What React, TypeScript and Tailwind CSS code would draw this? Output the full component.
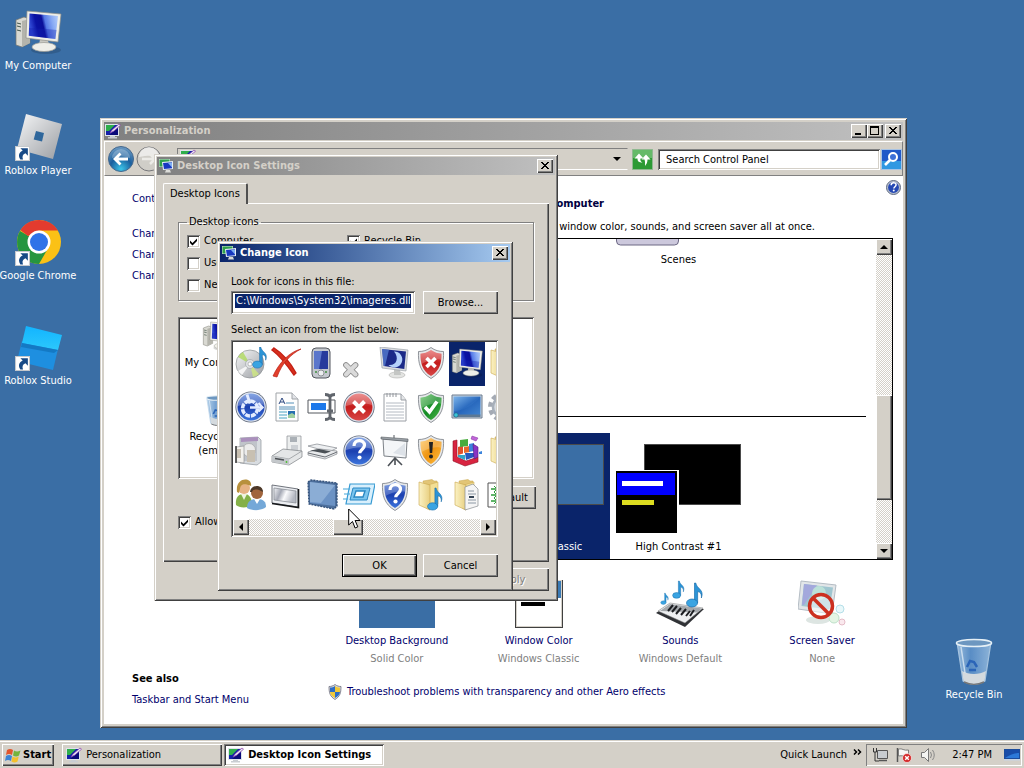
import React, { useState } from "react";
import type { ReactNode } from "react";

const WINDOW =
  "bg-[#d4d0c8] shadow-[inset_1px_1px_0_#d4d0c8,inset_-1px_-1px_0_#404040,inset_2px_2px_0_#fff,inset_-2px_-2px_0_#808080]";
const RAISED =
  "bg-[#d4d0c8] shadow-[inset_1px_1px_0_#fff,inset_-1px_-1px_0_#404040,inset_-2px_-2px_0_#808080]";
const SUNKEN =
  "shadow-[inset_1px_1px_0_#808080,inset_-1px_-1px_0_#fff,inset_2px_2px_0_#404040,inset_-2px_-2px_0_#d4d0c8]";
const TRACK = "bg-[repeating-conic-gradient(#ffffff_0_25%,#d4d0c8_0_50%)] bg-[length:2px_2px]";

function Svg({ size = 32, box = 32, children, className = "" }: { size?: number; box?: number; children: ReactNode; className?: string }) {
  return (
    <svg width={size} height={size} viewBox={`0 0 ${box} ${box}`} className={`shrink-0 ${className}`} aria-hidden="true">
      {children}
    </svg>
  );
}

function Defs() {
  return (
    <svg width="0" height="0" className="absolute" aria-hidden="true">
      <defs>
        <linearGradient id="screen" x1="0" y1="0.2" x2="1" y2="0">
          <stop offset="0" stopColor="#3048d4" />
          <stop offset="0.2" stopColor="#0a12a4" />
          <stop offset="0.42" stopColor="#0a0f9a" />
          <stop offset="0.52" stopColor="#5478e6" />
          <stop offset="0.75" stopColor="#88aaf4" />
          <stop offset="1" stopColor="#b8d0fa" />
        </linearGradient>
        <linearGradient id="silver" x1="0" y1="0" x2="1" y2="1">
          <stop offset="0" stopColor="#f6f7f8" />
          <stop offset="1" stopColor="#9a9da2" />
        </linearGradient>
        <linearGradient id="folder" x1="0" y1="0" x2="1" y2="0">
          <stop offset="0" stopColor="#fbf2c4" />
          <stop offset="1" stopColor="#e8cf80" />
        </linearGradient>
        <linearGradient id="red" x1="0" y1="0" x2="0" y2="1">
          <stop offset="0" stopColor="#e66a6a" />
          <stop offset="0.5" stopColor="#c41c1c" />
          <stop offset="1" stopColor="#d84848" />
        </linearGradient>
        <linearGradient id="green" x1="0" y1="0" x2="1" y2="1">
          <stop offset="0" stopColor="#6cc46c" />
          <stop offset="0.5" stopColor="#138a24" />
          <stop offset="1" stopColor="#4fb84a" />
        </linearGradient>
        <linearGradient id="blue" x1="0" y1="0" x2="0" y2="1">
          <stop offset="0" stopColor="#5a86dc" />
          <stop offset="0.5" stopColor="#1c40b0" />
          <stop offset="1" stopColor="#3c74dc" />
        </linearGradient>
        <linearGradient id="amber" x1="0" y1="0" x2="1" y2="1">
          <stop offset="0" stopColor="#ffc860" />
          <stop offset="0.5" stopColor="#ee9412" />
          <stop offset="1" stopColor="#ffbe40" />
        </linearGradient>
        <linearGradient id="wall" x1="0" y1="0" x2="1" y2="1">
          <stop offset="0" stopColor="#7db4ea" />
          <stop offset="0.5" stopColor="#2c6cc0" />
          <stop offset="1" stopColor="#5aa0e4" />
        </linearGradient>
        <linearGradient id="pane" x1="0" y1="0" x2="1" y2="0.3">
          <stop offset="0" stopColor="#f4f5f8" />
          <stop offset="0.35" stopColor="#a4a8b4" />
          <stop offset="0.6" stopColor="#fbfbfd" />
          <stop offset="1" stopColor="#b4b8c2" />
        </linearGradient>
        <linearGradient id="studioTop" x1="0" y1="0" x2="0" y2="1">
          <stop offset="0" stopColor="#12b4ff" />
          <stop offset="1" stopColor="#2cc8fc" />
        </linearGradient>
        <linearGradient id="glass" x1="0" y1="0" x2="1" y2="0">
          <stop offset="0" stopColor="#a9c9e6" />
          <stop offset="0.4" stopColor="#5f93cb" />
          <stop offset="1" stopColor="#9cc0e2" />
        </linearGradient>
        <radialGradient id="orb" cx="0.5" cy="0.9" r="0.9">
          <stop offset="0" stopColor="#3cc4e8" />
          <stop offset="0.5" stopColor="#1a5f9e" />
          <stop offset="1" stopColor="#6f9cc4" />
        </radialGradient>
      </defs>
    </svg>
  );
}

const Computer = ({ size = 32 }: { size?: number }) => (
  <Svg size={size} box={48}>
    <ellipse cx="32" cy="42" rx="15" ry="4" fill="#000" opacity=".15" />
    <path d="M2 12l8-3 6 2v24l-8 4-6-2z" fill="#d9d9d2" stroke="#77776f" strokeWidth=".7" />
    <path d="M8 13v26l8-4V11z" fill="#b4b4ac" />
    <path d="M3 15l4 1M3 18l4 1M3 22l4 1" stroke="#44564a" strokeWidth="1" />
    <path d="M26 31l8 1 1 6H25z" fill="#c9c9c2" />
    <ellipse cx="30" cy="39" rx="12" ry="4.500" fill="#efefe9" stroke="#9a9a92" strokeWidth=".7" />
    <path d="M13 3l34 3-3 28-32-4z" fill="#eeeee8" stroke="#8e8e86" strokeWidth=".7" />
    <path d="M15.500 5.500l28.500 2.600-2.600 23-26.600-3.300z" fill="url(#screen)" />
    <path d="M15 20c8 0 18 1 27.500 2l-1.100 9.100-26.600-3.300z" fill="#1420b0" opacity=".35" />
  </Svg>
);

const Personalize = ({ className = "" }: { className?: string }) => (
  <Svg size={16} box={16} className={className}>
    <path d="M0 1h14v12H0z" fill="#dfe4ea" />
    <path d="M1 2h12v10H1z" fill="#1420a8" />
    <path d="M1 2h9L4 8H1z" fill="#2fae4c" />
    <path d="M4 12l9-7v7z" fill="#0a0a78" />
    <path d="M5 13h5v1H5zM3 14h9v1.500H3z" fill="#c9cdd2" />
    <path d="M5 10l2-3 7-6 1.500 1.200L9 8z" fill="#e8e8f4" stroke="#8a3aa8" strokeWidth=".7" />
  </Svg>
);

const DialogIcon = () => (
  <Svg size={16} box={16}>
    <path d="M1 1h11v8H1z" fill="#cfe4d4" />
    <path d="M1.500 1.500h10v7h-10z" fill="#2fa04c" />
    <path d="M4 4l11-1v8L5 12z" fill="#e4ecf4" />
    <path d="M5 5l9-.8v6L6 11z" fill="#1838c0" />
    <path d="M10 5l4-.5v5z" fill="#7fb0f4" />
    <path d="M8 12h4l1 2.500H7z" fill="#dcdcd8" />
  </Svg>
);

const Shield = ({ fill, children }: { fill: string; children?: ReactNode }) => (
  <Svg>
    <path d="M16 .5c4 3 8 4 12.500 4C29 16 27 25 16 31.500 5 25 3 16 3.500 4.500c4.500 0 8.500-1 12.500-4z" fill="#e6e8ea" stroke="#777c84" strokeWidth=".8" />
    <path d="M16 3c3.500 2.400 7 3.500 10.500 3.700C26.500 16 25 23.500 16 29 7 23.500 5.500 16 5.500 6.700 9 6.500 12.500 5.400 16 3z" fill={fill} />
    <path d="M16 3c3.500 2.400 7 3.500 10.500 3.700 0 2-.1 4-.5 6C19 11 12 14 6.500 17 5.700 14 5.500 10 5.500 6.700 9 6.500 12.500 5.400 16 3z" fill="#fff" opacity=".22" />
    {children}
  </Svg>
);

const Question = () => (
  <g>
    <path d="M11 11c0-7 10.500-7 10.500-.7 0 4-4.800 4.200-4.800 8" fill="none" stroke="#fff" strokeWidth="3.200" />
    <circle cx="16.500" cy="22.500" r="2.100" fill="#fff" />
  </g>
);

const Orb = ({ fill, children }: { fill: string; children: ReactNode }) => (
  <Svg>
    <circle cx="16" cy="16" r="15.600" fill="#5c6678" />
    <circle cx="16" cy="16" r="14.800" fill="#dde3ee" />
    <circle cx="16" cy="16" r="13.500" fill={fill} />
    <path d="M3 15a13 13 0 0 1 26-1c-8-3-18-2-26 1z" fill="#fff" opacity=".25" />
    {children}
  </Svg>
);

const Folder = ({ children }: { children?: ReactNode }) => (
  <Svg>
    <path d="M8 2l9-1.500 2 1.500 3 0v24L12 30z" fill="#e2c576" stroke="#c9a64c" strokeWidth=".5" />
    <path d="M13 6l10-3v22l-9 6z" fill="#f3df95" stroke="#c9a64c" strokeWidth=".5" />
    <path d="M4 3l11 3v25L4 26z" fill="url(#folder)" stroke="#c9a64c" strokeWidth=".6" />
    {children}
  </Svg>
);

const Note = ({ x, y, s = 1 }: { x: number; y: number; s?: number }) => (
  <g transform={`translate(${x} ${y}) scale(${s})`}>
    <path d="M7 0c1 5 7 5 4.500 12 .4-4-1.500-5-3-5v9H6V0z" fill="#2c94d6" stroke="#1469a8" strokeWidth=".5" />
    <ellipse cx="4" cy="16" rx="4.400" ry="3.200" fill="#3aa4e2" stroke="#1469a8" strokeWidth=".5" />
  </g>
);

const Disc = () => (
  <Svg>
    <circle cx="15" cy="17" r="14" fill="url(#silver)" stroke="#8c9094" strokeWidth=".7" />
    <path d="M15 17L3 10a14 14 0 0 1 5-5z" fill="#a8d84c" opacity=".7" />
    <path d="M15 17l9 10a14 14 0 0 1-6 3z" fill="#d0e880" opacity=".8" />
    <path d="M15 17L7 28a14 14 0 0 1-4-4z" fill="#fff" opacity=".8" />
    <circle cx="15" cy="17" r="4.500" fill="#dfe2e4" stroke="#9a9ea2" strokeWidth=".6" />
    <circle cx="15" cy="17" r="2" fill="#fff" stroke="#888" strokeWidth=".5" />
    <Note x={18} y={0} s={1.1} />
  </Svg>
);

const RedCross = () => (
  <Svg>
    <path d="M3 1c8 5 16 14 22 25l-2 2C16 18 9 9 1 3z" fill="#d8301e" stroke="#c42014" strokeWidth="1.400" />
    <path d="M30 2C20 7 11 16 6 30l-4-1C8 16 18 5 30 2z" fill="#e2402c" stroke="#b81c12" strokeWidth=".7" />
  </Svg>
);

const Phone = () => (
  <Svg>
    <rect x="5" y="1" width="18" height="30" rx="4" fill="#c4c8ce" stroke="#53575e" />
    <path d="M7 4h14v18H7z" fill="#263a9c" />
    <path d="M7 4h8l-3 18H7z" fill="#7190e0" opacity=".7" />
    <circle cx="14" cy="26" r="3" fill="#eceef0" stroke="#6c7076" strokeWidth=".7" />
    <path d="M8 25h2M18 25h2" stroke="#3f8f3f" strokeWidth="1.500" />
  </Svg>
);

const SmallCross = () => (
  <Svg>
    <path d="M3 18l9.500 9.500M12.500 18L3 27.500" stroke="#8c8c8c" strokeWidth="5.800" strokeLinecap="round" />
    <path d="M3 18l9.500 9.500M12.500 18L3 27.500" stroke="#dadada" strokeWidth="4" strokeLinecap="round" />
  </Svg>
);

const NightMonitor = () => (
  <Svg>
    <ellipse cx="18" cy="28" rx="8" ry="3" fill="#e3e4e2" stroke="#a2a2a0" strokeWidth=".5" />
    <path d="M15 22l6 1 1 5h-7z" fill="#c4c6c4" />
    <path d="M1 0l28 3-2 21-24-3z" fill="#dcdee0" stroke="#9298a0" strokeWidth=".6" />
    <path d="M3 2l24 2.500-1.700 17.500L4.700 19z" fill="#1c2a88" />
    <path d="M15 4.500a8 8 0 1 1-5.500 13.500c8 1 11-7 5.500-13.500z" fill="#b4d0fa" />
    <path d="M3 2l7 .8L6 19l-1.500-.2z" fill="#5b86d8" opacity=".7" />
  </Svg>
);

const Access = () => (
  <Orb fill="url(#blue)">
    <circle cx="15" cy="17.500" r="7.500" fill="none" stroke="#e4ecff" strokeWidth="3.600" strokeDasharray="4.900 .99" />
    <path d="M12 3.500l3 9" stroke="#e4ecff" strokeWidth="2.800" fill="none" />
    <path d="M15 16.500h12M23.500 12l4 4.500-4 4" stroke="#e4ecff" strokeWidth="2.400" fill="none" />
  </Orb>
);

const RichDoc = () => (
  <Svg>
    <path d="M5 2h16l6 6v22H5z" fill="#fdfdfd" stroke="#a0a4a8" />
    <path d="M21 2v6h6" fill="#e2e4e8" stroke="#a0a4a8" />
    <path d="M8 13l3-6 3 6M9 11h4" stroke="#2c4880" fill="none" />
    <path d="M15 12h8M8 16h16M8 18h16" stroke="#5490b8" />
    <path d="M8 21h8M8 24h8M8 27h8" stroke="#4ba4c4" />
    <path d="M17 20h7v7h-7z" fill="#276fb0" />
    <path d="M17 24l4-2 3 2v3h-7z" fill="#9fcfa0" />
  </Svg>
);

const Rename = () => (
  <Svg>
    <path d="M1 9h27v13H1z" fill="#fff" stroke="#54585e" />
    <path d="M4 12h15v7H4z" fill="#1c78ea" />
    <path d="M18 3.500c3 0 4.500 1 5 2.500.5-1.500 2-2.500 5-2.500M18 28.500c3 0 4.500-1 5-2.500.5 1.500 2 2.500 5 2.500M23 6v20M20 20h6" stroke="#60656c" strokeWidth="2.800" fill="none" />
  </Svg>
);

const TextDoc = () => (
  <Svg>
    <path d="M5 3h17l5 6v21H5z" fill="#fff" stroke="#9a9ea4" />
    <path d="M22 3v6h5" fill="#e4e6e8" stroke="#9a9ea4" />
    <path d="M7 12h18M7 15h18M7 18h18M7 21h18M7 24h18M7 27h18" stroke="#b4bac2" />
    <path d="M8 2v4M11 2v4M14 2v4M17 2v4" stroke="#92969c" />
  </Svg>
);

const Wallpaper = () => (
  <Svg>
    <path d="M1 4h30v23H1z" fill="#c8d4e0" stroke="#6c7c90" />
    <path d="M2.500 5.500h27v19h-27z" fill="url(#wall)" />
    <path d="M3 20C12 20 22 14 29 6v18H3z" fill="#1f5cb4" opacity=".4" />
    <path d="M2.500 23.500h27V26h-27z" fill="#5c7894" />
    <circle cx="5" cy="24" r="2.200" fill="#3ac4d8" stroke="#1c5878" strokeWidth=".6" />
  </Svg>
);

const SoftwareBox = () => (
  <Svg>
    <path d="M5 3l18-1 3 3v22l-4 3-17-2z" fill="#d8dce0" stroke="#90969c" strokeWidth=".7" />
    <path d="M6 6h16v20H6z" fill="#c0c4ca" />
    <path d="M6 3l17-1v4l-17 1z" fill="#aa90bc" />
    <circle cx="14" cy="15" r="6.500" fill="#ececec" stroke="#a0a0a0" strokeWidth=".6" />
    <path d="M1 12l8-1v17l-8-1z" fill="#f4f2ee" stroke="#84888c" strokeWidth=".6" />
    <path d="M2 14l4 0v9H2zM12 15h8v12h-8z" fill="#c8c0b2" />
    <path d="M1 11v17" stroke="#333" strokeWidth="1.500" />
  </Svg>
);

const Drive = () => (
  <Svg>
    <path d="M16 1h14v16l-14 3z" fill="#eceeee" stroke="#8a8e92" strokeWidth=".7" />
    <path d="M19 2h7v5h-7z" fill="#aab0b6" />
    <path d="M20 10h7v6l-7 1z" fill="#ccd0d4" />
    <path d="M1 21l11-7 19 2v6L18 30 1 27z" fill="#e4e6e7" stroke="#7b7f84" strokeWidth=".7" />
    <path d="M1 21l17 3 13-8" fill="none" stroke="#94989c" strokeWidth=".8" />
    <path d="M18 24v6L1 27v-6z" fill="#c4c8cb" />
    <path d="M4 23.500l9 1.600" stroke="#4c5054" strokeWidth="1.500" />
    <circle cx="15.500" cy="27" r=".9" fill="#4cbc30" />
  </Svg>
);

const Scanner = () => (
  <Svg>
    <path d="M1 11l9-2 20 4-8 4z" fill="#eef0f2" stroke="#84888e" strokeWidth=".7" />
    <path d="M1 17l12-3 17 2v3l-12 5L1 20z" fill="#e8eaec" stroke="#84888e" strokeWidth=".7" />
    <path d="M3 15.500l9-1.500 12 2.500-6 2z" fill="#4a5056" />
    <path d="M1 18l17 4 12-5" stroke="#6a6e74" fill="none" />
  </Svg>
);

const Projector = () => (
  <Svg>
    <path d="M16 21v9M16 23l-7 8M16 23l7 7" stroke="#4b5056" strokeWidth="1.600" />
    <path d="M4 4l24 2-1 17-22-2z" fill="#f4f6f8" stroke="#7d8288" />
    <path d="M14 18L26 8v13z" fill="#dde2e8" />
    <path d="M2 2l27 2v2.500L2 4z" fill="#9ca2a8" stroke="#555a60" strokeWidth=".6" />
    <path d="M15 0v3" stroke="#555a60" />
  </Svg>
);

const Blocks = () => (
  <Svg>
    <path d="M2 6l4-1v17l9 4 12-4v5l-13 4L2 26z" fill="#d82440" stroke="#8e1024" strokeWidth=".6" />
    <path d="M7 12l5-1.500v8L7 20z" fill="#e2502c" />
    <path d="M9 5l8-1v7l-8 1z" fill="#48ac3c" />
    <path d="M13 12l6-1v6l-6 1z" fill="#e8682c" />
    <path d="M18 9l5-1v8l-5 1z" fill="#3c84dc" />
    <path d="M7 20h7v5l-7-3z" fill="#30a4c8" />
    <path d="M14 18h9v4l-8 3z" fill="#2858c0" />
    <path d="M22 9l5 3v10l-4 2z" fill="#8a34c4" stroke="#501c80" strokeWidth=".6" />
    <path d="M21 1l6 2-2 3-5-2z" fill="#c064d8" stroke="#80309c" strokeWidth=".5" />
    <path d="M28 17l3-1v3h-3z" fill="#3c84dc" />
  </Svg>
);

const Users = () => (
  <Svg>
    <circle cx="9" cy="9" r="6" fill="#e6b284" />
    <path d="M2 13C0-3 18-2 16 7c-4-2-8-2-9-1-2 1-2 4-3 8z" fill="#b8903c" />
    <path d="M1 26c-1-8 3-11 8-11s8 3 8 12c-6 2-13 2-16-1z" fill="#84b048" />
    <path d="M6 15l3 6 3-6z" fill="#eef4e0" />
    <circle cx="22" cy="14" r="6" fill="#a0643c" />
    <path d="M15 13c1-8 13-8 13 0l-2-1c-4-2-8-2-9 1z" fill="#4c3828" />
    <path d="M12 29c0-6 3-9 10-9s9 3 9 8c-5 4-14 4-19 1z" fill="#74a8d8" />
    <path d="M19 20l3 5 3-5z" fill="#fff" />
  </Svg>
);

const Pane = () => (
  <Svg>
    <path d="M1 6l26 4v18L1 24z" fill="#eceef2" stroke="#70747c" />
    <path d="M3 9l22 3v12L3 21z" fill="url(#pane)" stroke="#8c9098" strokeWidth=".8" />
    <path d="M27.500 10v18.500L1 24.500" stroke="#15171a" strokeWidth="1.600" fill="none" />
  </Svg>
);

const Chip = () => (
  <Svg>
    <path d="M1 3l3-2 26 3v23l-3 3L2 25z" fill="#4d6f9c" stroke="#35537c" strokeDasharray="2 1" strokeWidth="1.400" />
    <path d="M3 3l25 3v21L3 24z" fill="#6b92c4" />
    <path d="M3 3l25 3-14 18-11-1z" fill="#a5c2e4" opacity=".55" />
  </Svg>
);

const RunBox = () => (
  <Svg>
    <path d="M7 5h25l-4 20H3z" fill="#d8effc" stroke="#3499d2" strokeWidth="1.200" />
    <path d="M10 9h17l-3 12H7z" fill="#7cc5ee" stroke="#2a88c4" />
    <path d="M13 12h9l-2 6h-9z" fill="#fff" stroke="#2a88c4" strokeWidth="1.400" />
    <path d="M0 10h7M1 15h6M0 20h5" stroke="#45a8dc" strokeWidth="1.200" />
  </Svg>
);

const MusicFolder = () => <Folder><Note x={13} y={9} s={1.15} /></Folder>;
const DocFolder = () => (
  <Folder>
    <path d="M14 8l8-3 5 5v17l-13 4z" fill="#f5f5f5" stroke="#888c90" strokeWidth=".7" />
    <path d="M17 12h6M17 15h8M17 21h8M17 24h8" stroke="#8c98a4" />
    <path d="M18 17h5v2h-5z" fill="#345" />
  </Folder>
);
const Gear = () => (
  <Svg>
    <circle cx="16" cy="16" r="12.500" fill="none" stroke="#a4aab4" strokeWidth="5" strokeDasharray="4.500 3.350" />
    <circle cx="16" cy="16" r="10" fill="#d8dce2" stroke="#a8b0ba" strokeWidth="2.500" />
  </Svg>
);
const ArrowDoc = () => (
  <Svg>
    <path d="M1 4h26v24H1z" fill="#fff" stroke="#555" />
    <path d="M4 10h6M4 16h6M4 22h6" stroke="#2c9c38" strokeWidth="1.500" />
    <path d="M7 7l3 3-3 3M7 13l3 3-3 3M7 19l3 3-3 3" stroke="#2c9c38" fill="none" />
  </Svg>
);

const iconColumns: { name: string; art: ReactNode }[][] = [
  [
    { name: "Music disc", art: <Disc /> },
    { name: "Ease of access", art: <Access /> },
    { name: "Programs", art: <SoftwareBox /> },
    { name: "Users", art: <Users /> },
  ],
  [
    { name: "Delete", art: <RedCross /> },
    { name: "Rich document", art: <RichDoc /> },
    { name: "Drive", art: <Drive /> },
    { name: "Window pane", art: <Pane /> },
  ],
  [
    { name: "Phone", art: <Phone /> },
    { name: "Rename", art: <Rename /> },
    { name: "Scanner", art: <Scanner /> },
    { name: "Memory chip", art: <Chip /> },
  ],
  [
    { name: "Remove", art: <SmallCross /> },
    { name: "Error", art: <Orb fill="url(#red)"><path d="M10.500 10.500l11 11M21.500 10.500l-11 11" stroke="#fff" strokeWidth="4" /></Orb> },
    { name: "Help", art: <Orb fill="url(#blue)"><Question /></Orb> },
    { name: "Run", art: <RunBox /> },
  ],
  [
    { name: "Sleep", art: <NightMonitor /> },
    { name: "Text document", art: <TextDoc /> },
    { name: "Projector", art: <Projector /> },
    { name: "Help shield", art: <Shield fill="url(#blue)"><Question /></Shield> },
  ],
  [
    { name: "Error shield", art: <Shield fill="url(#red)"><path d="M11.500 11l9 9M20.500 11l-9 9" stroke="#fff" strokeWidth="3.600" /></Shield> },
    { name: "Safe shield", art: <Shield fill="url(#green)"><path d="M10 16l4.500 5L22 10.500" stroke="#fff" strokeWidth="3.600" fill="none" /></Shield> },
    { name: "Warning shield", art: <Shield fill="url(#amber)"><path d="M14 7h4l-.8 11h-2.400z" fill="#222" /><circle cx="16" cy="21.500" r="2" fill="#222" /></Shield> },
    { name: "Music folder", art: <MusicFolder /> },
  ],
  [
    { name: "Computer", art: <Computer /> },
    { name: "Desktop", art: <Wallpaper /> },
    { name: "Blocks", art: <Blocks /> },
    { name: "Documents folder", art: <DocFolder /> },
  ],
  [
    { name: "Folder", art: <Folder /> },
    { name: "Settings", art: <Gear /> },
    { name: "Open folder", art: <Folder /> },
    { name: "Transfer", art: <ArrowDoc /> },
  ],
];

const Shortcut = () => (
  <Svg size={15} box={14} className="absolute bottom-0 left-px">
    <path d="M0 0h14v14H0z" fill="#fff" />
    <path d="M.5.5h13v13H.5z" fill="none" stroke="#c4c8cc" />
    <path d="M5 2h7v7L9.800 6.800C7 8 6.500 10 7.500 12.500H5C2.500 9 4 5.500 7.200 4.200z" fill="#174a86" />
  </Svg>
);

const RobloxPlayer = () => (
  <Svg size={48} box={48}>
    <path d="M12 1l36 10-9 35L3 36z" fill="url(#silver)" />
    <path d="M22 18l8 2-2 8.500-8.300-2z" fill="#2f679c" />
  </Svg>
);
const Chrome = () => (
  <Svg size={48} box={48}>
    <circle cx="25" cy="24" r="22" fill="#fbc116" />
    <path d="M6 13a22 22 0 0 0 19 33l9.500-16.500L25 24z" fill="#269540" />
    <path d="M25 2C17 2 10 6 6.500 12.200L14 18l11-5.500h19A22 22 0 0 0 25 2z" fill="#e33b2e" />
    <circle cx="25" cy="24" r="11.500" fill="#fff" />
    <circle cx="25" cy="24" r="9" fill="#2f73e8" />
  </Svg>
);
const RobloxStudio = () => (
  <Svg size={48} box={48}>
    <path d="M8 18l36 8-5 21L3 38z" fill="#1e8fe0" />
    <path d="M12 3l36 9-4 15-36-7z" fill="url(#studioTop)" />
    <path d="M8 20l36 7-4 3L7 24z" fill="#1479c4" />
  </Svg>
);
const RecycleBin = ({ size = 48 }: { size?: number }) => (
  <Svg size={size} box={48}>
    <path d="M7 5h34l-6 39c-6 4-16 4-22 0z" fill="url(#glass)" opacity=".85" stroke="#b9d3ea" strokeWidth="1.200" />
    <path d="M12 34c7 4 17 4 24 0l-1.500 10c-6 4-16 4-21 0z" fill="#d4dade" />
    <path d="M14 45c6 3 14 3 20 0" stroke="#777" strokeWidth="1.500" fill="none" />
    <ellipse cx="24" cy="6" rx="17.500" ry="3.500" fill="#6d97c0" stroke="#e6f0f6" strokeWidth="1.600" />
    <path d="M17 30l3-6 4 1 3 5M19 33h7" stroke="#2b65b8" strokeWidth="2.500" fill="none" />
    <path d="M11 10l4 26" stroke="#dceaf6" strokeWidth="1.500" opacity=".8" />
  </Svg>
);

function DesktopIcon({ label, art, shortcut = false }: { label: string; art: ReactNode; shortcut?: boolean }) {
  return (
    <button type="button" className="flex w-20 flex-col items-center gap-[3px] text-white">
      <span className="relative block">
        {art}
        {shortcut && <Shortcut />}
      </span>
      <span className="whitespace-nowrap">{label}</span>
    </button>
  );
}

function Button({ children, primary = false, disabled = false }: { children: ReactNode; primary?: boolean; disabled?: boolean }) {
  return (
    <button
      type="button"
      disabled={disabled}
      className={`h-[23px] min-w-[75px] px-2 ${RAISED} ${primary ? "border border-black" : ""} ${disabled ? "text-[#808080] [text-shadow:1px_1px_0_#fff]" : ""}`}
    >
      {children}
    </button>
  );
}

function Caption({ kind }: { kind: "min" | "max" | "close" }) {
  const names = { min: "Minimize", max: "Maximize", close: "Close" };
  return (
    <button type="button" aria-label={names[kind]} className={`flex h-3.5 w-4 items-center justify-center ${RAISED}`}>
      <svg width="16" height="14" viewBox="0 0 16 14" shapeRendering="crispEdges">
        {kind === "min" && <path d="M4 9h6v2H4z" />}
        {kind === "max" && <path d="M3 2h9v9H3zM4 4v6h7V4z" fillRule="evenodd" />}
        {kind === "close" && (
          <path d="M4 3h2v1h1v1h2V4h1V3h2v1h-1v1h-1v1H9v1h1v1h1v1h1v1h-2V9H9V8H7v1H6v1H4V9h1V8h1V7h1V6H6V5H5V4H4z" />
        )}
      </svg>
    </button>
  );
}

function TitleBar({ icon, title, active = false, children }: { icon: ReactNode; title: string; active?: boolean; children: ReactNode }) {
  return (
    <header
      className={`flex h-[18px] items-center pr-0.5 pl-px font-bold ${active ? "bg-linear-to-r from-[#0a246a] to-[#a6caf0] text-white" : "bg-linear-to-r from-[#808080] to-[#c0c0c0] text-[#d4d0c8]"}`}
    >
      {icon}
      <h2 className="ml-[3px] flex-1">{title}</h2>
      {children}
    </header>
  );
}

function CheckBox({ label, checked = false }: { label: string; checked?: boolean }) {
  const [on, setOn] = useState(checked);
  return (
    <label className="flex items-center gap-1">
      <span className="relative block size-[13px]">
        <input
          type="checkbox"
          checked={on}
          onChange={(e) => setOn(e.target.checked)}
          className={`block size-[13px] appearance-none bg-white ${SUNKEN}`}
        />
        {on && (
          <svg width="13" height="13" viewBox="0 0 13 13" className="pointer-events-none absolute inset-0">
            <path d="M3 5.500l2.500 2.500L10 3.500v2.500L5.500 10.500 3 8z" />
          </svg>
        )}
      </span>
      {label}
    </label>
  );
}

function Arrow({ dir, label }: { dir: "up" | "down" | "left" | "right"; label: string }) {
  const d = { up: "M4 10h8L8 6z", down: "M4 6h8l-4 4z", left: "M10 4v8L6 8z", right: "M6 4v8l4-4z" }[dir];
  return (
    <button type="button" aria-label={label} className={`size-4 shrink-0 ${RAISED}`}>
      <svg width="16" height="16" viewBox="0 0 16 16">
        <path d={d} />
      </svg>
    </button>
  );
}

function ThemePreview({ wall, children }: { wall: string; children: ReactNode }) {
  return (
    <svg width="125" height="89" viewBox="0 0 125 89" aria-hidden="true" shapeRendering="crispEdges">
      <path d="M28.500.5h96v60h-96z" fill={wall} stroke="#4a4a4a" />
      {children}
    </svg>
  );
}

function Theme({ label, selected = false, children }: { label: string; selected?: boolean; children: ReactNode }) {
  return (
    <button type="button" className={`flex w-[137px] flex-col items-center gap-[7px] pt-[11px] pb-[5px] ${selected ? "bg-[#0a246a] text-white" : ""}`}>
      {children}
      <span>{label}</span>
    </button>
  );
}

const Setting = ({ label, value, children }: { label: string; value: string; children: ReactNode }) => (
  <a href="#" className="flex flex-col items-center">
    <span className="flex h-12 items-end">{children}</span>
    <span className="mt-1.5 text-[#00006c]">{label}</span>
    <span className="mt-1 text-[#808080]">{value}</span>
  </a>
);

function Personalization() {
  return (
    <section aria-label="Personalization" className={`absolute top-[118px] left-[100px] flex h-[610px] w-[807px] flex-col p-1 ${WINDOW}`}>
      <TitleBar icon={<Personalize />} title="Personalization">
        <div className="flex">
          <Caption kind="min" />
          <Caption kind="max" />
          <span className="ml-0.5 flex">
            <Caption kind="close" />
          </span>
        </div>
      </TitleBar>
      <nav className="mt-px flex h-[35px] items-center border border-t-white border-r-[#808080] border-b-[#808080] border-l-white pt-px pl-[3px]">
        <button type="button" aria-label="Back">
          <Svg size={26} box={26}>
            <circle cx="13" cy="13" r="12.500" fill="url(#orb)" stroke="#44678c" />
            <path d="M4 12a9 9 0 0 1 18 0c-6-2-12-2-18 0z" fill="#fff" opacity=".25" />
            <path d="M20 13H7M12.500 7.500L7 13l5.500 5.500" stroke="#fff" strokeWidth="2.800" fill="none" />
          </Svg>
        </button>
        <button type="button" aria-label="Forward" className="ml-0.5">
          <Svg size={26} box={26}>
            <circle cx="13" cy="13" r="12" fill="#d0cec8" stroke="#77777a" />
            <path d="M3 11a10 10 0 0 1 20 0c-7-2-13-1-20 0z" fill="#fff" opacity=".6" />
            <path d="M6 13h12M14 8l5 5-5 5" stroke="#ecebe7" strokeWidth="2.500" fill="none" />
          </Svg>
        </button>
        <div className="ml-[15px] flex h-[22px] flex-1 items-center gap-1.5 border border-t-[#808080] border-r-[#d4d0c8] border-b-white border-l-[#808080] pr-1.5 pl-0.5">
          <Personalize className="self-start" />
          <span className="flex-1 whitespace-nowrap">▸ Control Panel ▸ Appearance and Personalization ▸ Personalization</span>
          <button type="button" aria-label="Previous locations">
            <svg width="8" height="4" viewBox="0 0 8 4">
              <path d="M0 0h8L4 4z" />
            </svg>
          </button>
        </div>
        <button type="button" aria-label="Refresh" className="ml-1">
          <Svg size={21} box={21}>
            <path d="M.5.5h20v20H.5z" fill="#2c9a34" stroke="#8fb890" />
            <path d="M1 1h19v8H1z" fill="#8cd08c" opacity=".6" />
            <path d="M7 4.500L2.500 9.500h3c0 3 1.500 4 5 4-2-1-2.500-2.500-2-4h3zM14 5.500l4.500 5h-3c0 3-1 4.500-2.500 6.500 0-2 .3-4-.5-6.500h-3z" fill="#fff" />
          </Svg>
        </button>
        <input
          aria-label="Search Control Panel"
          defaultValue="Search Control Panel"
          className={`ml-[5px] h-[21px] w-[222px] bg-white px-2 ${SUNKEN}`}
        />
        <button type="button" aria-label="Search" className="ml-px">
          <Svg size={21} box={21}>
            <path d="M.5.5h20v20H.5z" fill="#2058c8" stroke="#a9c4e4" />
            <path d="M1 12h19v8H1z" fill="#38b4ec" opacity=".7" />
            <circle cx="12" cy="8" r="4" fill="#3c70d8" stroke="#fff" strokeWidth="2" />
            <path d="M9 11l-5 5" stroke="#fff" strokeWidth="2.600" />
          </Svg>
        </button>
      </nav>
      <div className="flex flex-1 bg-white">
        <aside className="flex w-[222px] flex-col justify-between pt-4 pb-[17px] pl-7 text-[#00006c]">
          <div className="flex flex-col gap-[7px]">
            <a href="#" className="mb-3.5">Control Panel Home</a>
            <a href="#">Change desktop icons</a>
            <a href="#">Change mouse pointers</a>
            <a href="#">Change your account picture</a>
          </div>
          <div className="flex flex-col gap-[7px]">
            <h3 className="font-bold text-black">See also</h3>
            <a href="#">Taskbar and Start Menu</a>
          </div>
        </aside>
        <main className="flex min-w-0 flex-1 flex-col pr-2.5">
          <button type="button" aria-label="Help" className="-mr-2.5 mt-1 self-end pr-0.5">
            <Svg size={15}>
              <circle cx="16" cy="16" r="15" fill="#b4bccc" stroke="#5c6880" strokeWidth="2" />
              <circle cx="16" cy="16" r="11.500" fill="#2448b4" />
              <Question />
            </Svg>
          </button>
          <h1 className="mt-0.5 flex w-[278px] justify-end font-bold whitespace-nowrap text-[#000040]">
            Change the visuals and sounds on your computer
          </h1>
          <p className="mt-[9px] flex w-[489px] justify-end whitespace-nowrap">
            Click a theme to change the desktop background, window color, sounds, and screen saver all at once.
          </p>
          <div className="mt-1 flex h-[322px] border border-black">
            <div className="flex-1 overflow-hidden pr-2.5 pl-[9px]">
              <div className="flex">
                {["Landscapes", "Nature", "Scenes"].map((name) => (
                  <button key={name} type="button" className="flex w-[137px] flex-col items-center">
                    <svg width="125" height="7" viewBox="0 0 125 7" aria-hidden="true">
                      <path d="M.5-1v3q0 4 4 4h54q4 0 4-4v-3z" fill="#ccc8dc" stroke="#6c6884" />
                    </svg>
                    <span className="mt-[7px]">{name}</span>
                  </button>
                ))}
              </div>
              <h3 className="mt-[135px] border-b border-black text-[#00006c]">Basic and High Contrast Themes (6)</h3>
              <div className="mt-4 flex">
                <Theme label="Windows 7 Basic">
                  <ThemePreview wall="#3a6ea5">
                    <path d="M0 27h62v62H0z" fill="#cfe0f4" />
                  </ThemePreview>
                </Theme>
                <Theme label="Windows Classic" selected>
                  <ThemePreview wall="#3a6ea5">
                    <path d="M0 27h62v62H0z" fill="#d4d0c8" />
                  </ThemePreview>
                </Theme>
                <Theme label="High Contrast #1">
                  <ThemePreview wall="#000">
                    <path d="M0 26h63v63H0z" fill="#fff" />
                    <path d="M0 27h61v62H0z" />
                    <path d="M1 29h58v22H1z" fill="#00f" />
                    <path d="M6 37h41v5H6z" fill="#fff" />
                    <path d="M6 56h32v5H6z" fill="#dcdc20" />
                  </ThemePreview>
                </Theme>
              </div>
            </div>
            <div className={`flex w-4 flex-col ${TRACK}`}>
              <Arrow dir="up" label="Scroll up" />
              <div className="flex-1" />
              <div className={`h-[105px] ${RAISED}`} />
              <div className="h-[43px]" />
              <Arrow dir="down" label="Scroll down" />
            </div>
          </div>
          <div className="mt-5 grid grid-cols-4">
            <Setting label="Desktop Background" value="Solid Color">
              <span className="h-12 w-[76px] bg-[#3a6ea5]" />
            </Setting>
            <Setting label="Window Color" value="Windows Classic">
              <svg width="48" height="48" viewBox="0 0 48 48" aria-hidden="true" shapeRendering="crispEdges">
                <path d="M0 0h48v48H0z" fill="#404040" />
                <path d="M1 0h46v47H1z" fill="#d4d0c8" />
                <path d="M2 18h44v28H2z" fill="#fff" />
                <path d="M2 1h44v17H2z" fill="#3a7ab4" />
                <path d="M6 22h24v4H6z" />
              </svg>
            </Setting>
            <Setting label="Sounds" value="Windows Default">
              <Svg size={48} box={48}>
                <path d="M0 33l13-9 35 5-19 18z" fill="#303236" />
                <path d="M2 31l12-8 33 5-18 15z" fill="#eef0f2" stroke="#777" strokeWidth=".5" />
                <path d="M4 31l10-7 32 4.500-5 4z" fill="#a4a8ac" />
                <path d="M12 31l5-6M16 32l5-6M20 34l5-6M25 35l5-6M30 36l4-5M34 36l4-6" stroke="#1c1e22" strokeWidth="2" />
                <Note x={5} y={13} s={0.6} />
                <Note x={17} y={1} s={0.9} />
                <Note x={31} y={3} s={1.25} />
              </Svg>
            </Setting>
            <Setting label="Screen Saver" value="None">
              <Svg size={48} box={48}>
                <path d="M3 1l35 4-4 29-34-5z" fill="#e2e6e8" stroke="#b4bcc4" />
                <path d="M6 4l29 3.500-3.500 22L3.500 26z" fill="#9fc6d0" />
                <path d="M6 4l13 1.600L6 25l-2-.3z" fill="#a3a8dc" />
                <circle cx="21" cy="13" r="7" fill="#c8ecdc" opacity=".7" />
                <ellipse cx="20" cy="40" rx="12" ry="4" fill="#dde5e2" />
                <circle cx="42" cy="29" r="4" fill="#e9f8fa" stroke="#b5dfe8" />
                <circle cx="36" cy="38" r="5" fill="#e4f5e4" stroke="#bce0c8" />
                <circle cx="44" cy="42" r="3" fill="#fae9ee" stroke="#e4bcc8" />
                <circle cx="23" cy="26" r="11.500" fill="#fff" opacity=".5" />
                <circle cx="23" cy="26" r="11.500" fill="none" stroke="#cc3020" strokeWidth="3.500" />
                <path d="M15 18l16 16" stroke="#cc3020" strokeWidth="3.500" />
              </Svg>
            </Setting>
          </div>
          <a href="#" className="mt-[18px] flex items-center gap-1 pl-px text-[#00006c]">
            <Svg size={16}>
              <path d="M16 1c4 3 8 4 12 4 0 13-2 20-12 26C6 25 4 18 4 5c4 0 8-1 12-4z" fill="#d8dce0" stroke="#667" strokeWidth="1.500" />
              <path d="M16 4v12H6V7c4 0 7-1 10-3zM16 16h10c-1 6-4 9-10 12z" fill="#2c6cc4" />
              <path d="M16 4v12h10V7c-4 0-7-1-10-3zM16 16H6c1 6 4 9 10 12z" fill="#f0c838" />
            </Svg>
            Troubleshoot problems with transparency and other Aero effects
          </a>
        </main>
      </div>
    </section>
  );
}

function DesktopIconSettings() {
  return (
    <section aria-label="Desktop Icon Settings" className={`absolute top-[154px] left-[154px] flex w-[404px] flex-col p-[3px] pb-[10px] ${WINDOW}`}>
      <TitleBar icon={<DialogIcon />} title="Desktop Icon Settings">
        <Caption kind="close" />
      </TitleBar>
      <div className="px-1.5 pt-2">
        <div role="tablist" className="flex">
          <button
            type="button"
            role="tab"
            className="relative z-10 -mb-px h-[21px] rounded-t-[2px] border-t border-r-2 border-l border-t-white border-r-[#505050] border-l-white bg-[#d4d0c8] px-1.5"
          >
            Desktop Icons
          </button>
        </div>
        <div className={`flex flex-col px-[15px] pt-3 pb-[33px] ${RAISED}`}>
          <fieldset className="border border-[#808080] px-2 pb-2 shadow-[1px_1px_0_#fff,inset_1px_1px_0_#fff]">
            <legend className="px-0.5">Desktop icons</legend>
            <div className="mt-[5px] grid grid-cols-[160px_1fr] gap-y-2">
              <CheckBox label="Computer" checked />
              <CheckBox label="Recycle Bin" checked />
              <CheckBox label="User's Files" />
              <CheckBox label="Control Panel" />
              <CheckBox label="Network" />
            </div>
          </fieldset>
          <ul className={`mt-4 flex h-[162px] flex-col gap-6 bg-white px-[3px] pt-[3px] text-center ${SUNKEN}`}>
            <li className="flex w-[74px] flex-col items-center gap-1">
              <Computer />
              <span>My Computer</span>
            </li>
            <li className="flex w-[74px] flex-col items-center gap-1">
              <RecycleBin size={32} />
              <span>Recycle Bin (empty)</span>
            </li>
          </ul>
          <div className="-mr-0.5 mt-[7px] flex justify-end gap-1.5">
            <Button>Change Icon...</Button>
            <Button>Restore Default</Button>
          </div>
          <div className="mt-1.5">
            <CheckBox label="Allow themes to change desktop icons" checked />
          </div>
        </div>
        <div className="mt-1.5 flex justify-end gap-1.5">
          <Button>OK</Button>
          <Button>Cancel</Button>
          <Button disabled>Apply</Button>
        </div>
      </div>
    </section>
  );
}

function ChangeIcon() {
  const [selected, setSelected] = useState("Computer");
  return (
    <section aria-label="Change Icon" className={`absolute top-[241px] left-[217px] flex w-[296px] flex-col p-[3px] pb-[14px] ${WINDOW}`}>
      <TitleBar icon={<DialogIcon />} title="Change Icon" active>
        <Caption kind="close" />
      </TitleBar>
      <div className="flex flex-col pt-[13px] pr-3 pl-[11px]">
        <label htmlFor="file">Look for icons in this file:</label>
        <div className="mt-0.5 flex justify-between">
          <div className={`flex h-[23px] w-[184px] items-start bg-white px-1 pt-[3px] ${SUNKEN}`}>
            <input
              id="file"
              defaultValue="C:\Windows\System32\imageres.dll"
              className="field-sizing-content h-3.5 max-w-full bg-[#0a246a] px-px text-white"
            />
          </div>
          <Button>Browse...</Button>
        </div>
        <span id="pick" className="mt-[9px]">Select an icon from the list below:</span>
        <div className={`mt-[3px] flex flex-col gap-px bg-white p-0.5 ${SUNKEN}`}>
          <div role="listbox" aria-labelledby="pick" className="flex overflow-hidden">
            {iconColumns.map((column, i) => (
              <div key={i} className="flex shrink-0 flex-col">
                {column.map(({ name, art }) => (
                  <button
                    key={name}
                    type="button"
                    role="option"
                    aria-label={name}
                    aria-selected={selected === name}
                    onClick={() => setSelected(name)}
                    className={`flex h-11 w-9 items-center justify-center pb-0.5 ${selected === name ? "bg-[#0a246a]" : ""}`}
                  >
                    {art}
                  </button>
                ))}
              </div>
            ))}
          </div>
          <div className={`flex h-4 ${TRACK}`}>
            <Arrow dir="left" label="Scroll left" />
            <div className="w-[84px]" />
            <div className={`w-[30px] ${RAISED}`} />
            <div className="flex-1" />
            <Arrow dir="right" label="Scroll right" />
          </div>
        </div>
        <div className="mt-[17px] flex justify-end gap-1.5">
          <Button primary>OK</Button>
          <Button>Cancel</Button>
        </div>
      </div>
    </section>
  );
}

function Taskbar() {
  return (
    <footer className="flex h-7 items-center gap-2 bg-[#d4d0c8] px-0.5 pt-1 pb-0.5 shadow-[inset_0_1px_0_#d4d0c8,inset_0_2px_0_#fff]">
      <button type="button" className={`flex h-[22px] items-center gap-0.5 px-[3px] font-bold ${RAISED}`}>
        <Svg size={16} box={16}>
          <path d="M2 3c2-1.500 4-1.500 6 0L7 8C5 6.500 3 6.500 1 8z" fill="#e2562c" />
          <path d="M9 3.500c2 1.300 4 1.300 6.500 0L14 8.500c-2 1.300-4 1.300-6 0z" fill="#74b43c" />
          <path d="M1 9c2-1.500 4-1.500 6 0l-1 5c-2-1.500-4-1.500-6 0z" fill="#3c84d4" />
          <path d="M7.500 9.500c2 1.300 4 1.300 6.200 0l-1.200 5c-2 1.300-4 1.300-6 0z" fill="#f4c02c" />
        </Svg>
        Start
      </button>
      <div className="flex flex-1 gap-0.5">
        <button type="button" className={`flex h-[22px] w-40 items-center gap-1 px-1 ${RAISED}`}>
          <Personalize />
          Personalization
        </button>
        <button type="button" className={`flex h-[22px] w-40 items-center gap-1 bg-white px-1 font-bold whitespace-nowrap ${SUNKEN}`}>
          <Personalize />
          Desktop Icon Settings
        </button>
      </div>
      <div className="flex items-center gap-1.5">
        <span>Quick Launch</span>
        <button type="button" aria-label="More" className="mb-1.5">
          <svg width="9" height="6" viewBox="0 0 9 6" fill="none" stroke="#000" strokeWidth="1.500">
            <path d="M1 .5L3.500 3 1 5.500M5 .5L7.500 3 5 5.500" />
          </svg>
        </button>
      </div>
      <div className="-ml-1 flex h-[22px] items-center gap-2 pr-0.5 pl-1.5 shadow-[inset_1px_1px_0_#808080,inset_-1px_-1px_0_#fff]">
        <Svg size={16} box={16}>
          <path d="M5.500 3.500h10v8h-10z" fill="#c8ccd0" stroke="#555" />
          <path d="M7 13.500h8" stroke="#555" strokeWidth="1.500" />
          <path d="M1.500 1v4h3V1M3 5v9h4" stroke="#333" fill="none" />
        </Svg>
        <Svg size={16} box={16}>
          <path d="M1.500 1v14" stroke="#555" strokeWidth="1.500" />
          <path d="M2.500 2c4-1 5 2 10 1v6c-4 1-6-1-10 0z" fill="#f6f6f4" stroke="#666" strokeWidth=".8" />
          <circle cx="11" cy="11" r="4.500" fill="#d42c2c" stroke="#fff" strokeWidth=".6" />
          <path d="M9.200 9.200l3.600 3.600M12.800 9.200l-3.600 3.600" stroke="#fff" strokeWidth="1.400" />
        </Svg>
        <Svg size={16} box={16}>
          <path d="M1.500 5.500h3l4-4v13l-4-4h-3z" fill="#f4f4f2" stroke="#777" />
          <path d="M10.500 5q2 3 0 6M12.500 3q3.500 5 0 10" stroke="#888" fill="none" />
        </Svg>
        <time className="ml-2">2:47 PM</time>
        <button type="button" aria-label="Show desktop" className="ml-1">
          <Svg size={16} box={16}>
            <path d="M0 2h16v11H0z" fill="#1c4c9c" />
            <path d="M1 3h14v8H1z" fill="#2c78d8" />
            <path d="M1 3l14 0v3C10 6 6 8 1 11z" fill="#184ca8" />
            <path d="M0 12h16v1.500H0z" fill="#c8d4e4" />
          </Svg>
        </button>
      </div>
    </footer>
  );
}

export default function App() {
  return (
    <div className="relative flex min-h-screen flex-col overflow-hidden bg-[#3a6ea5] font-['DejaVu_Sans_Condensed','DejaVu_Sans',sans-serif] text-[11px] leading-[14px] text-black">
      <Defs />
      <div className="flex flex-1 justify-between">
        <div className="-ml-0.5 flex flex-col gap-10 pt-2">
          <DesktopIcon label="My Computer" art={<Computer size={48} />} />
          <DesktopIcon label="Roblox Player" art={<RobloxPlayer />} shortcut />
          <DesktopIcon label="Google Chrome" art={<Chrome />} shortcut />
          <DesktopIcon label="Roblox Studio" art={<RobloxStudio />} shortcut />
        </div>
        <div className="flex flex-col justify-end pr-2.5 pb-[38px]">
          <DesktopIcon label="Recycle Bin" art={<RecycleBin />} />
        </div>
      </div>
      <Personalization />
      <DesktopIconSettings />
      <ChangeIcon />
      <Taskbar />
      <svg width="13" height="21" viewBox="0 0 13 21" className="pointer-events-none absolute top-[508px] left-[348px]" aria-hidden="true">
        <path d="M.7 1v16l3.800-3.500 2.600 6.500 2.700-1.200-2.700-6.300h5z" fill="#fff" stroke="#000" />
      </svg>
    </div>
  );
}
